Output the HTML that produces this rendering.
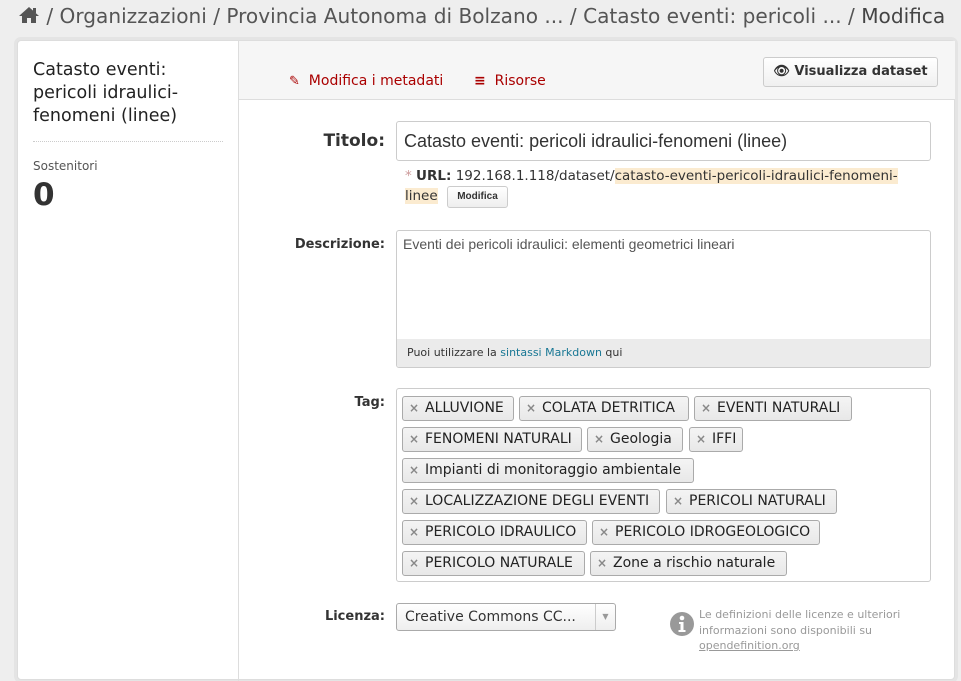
<!DOCTYPE html>
<html><head><meta charset="utf-8"><style>
*{margin:0;padding:0;box-sizing:border-box}
body{width:961px;height:659px;overflow:hidden;background:#eee;font-family:"DejaVu Sans",sans-serif;color:#333;position:relative}
.a{position:absolute;white-space:nowrap}
.bc{left:18px;top:4px;font-size:20.1px;color:#555}
.panel{left:17px;top:40px;width:938px;height:640px;background:#fff;border:1px solid #ddd;border-radius:4px;box-shadow:0 0 0 3px #e4e4e4}
.side{left:0;top:0;width:221px;height:640px;border-right:1px solid #ddd}
.hdr{left:221px;top:0;width:716px;height:59px;background:#f6f6f6;border-bottom:1px solid #ddd}
.lbl{font-weight:bold;text-align:right;width:200px}
.tag{position:absolute;height:25px;border:1px solid #aaa;border-radius:3px;background:linear-gradient(#f4f4f4,#e8e8e8);font-size:14px;line-height:23px;padding-left:22px;color:#222;white-space:nowrap;overflow:hidden}
.tag:before{content:"×";position:absolute;left:6px;top:0;color:#888;font-weight:bold;font-size:12px}
</style></head><body>
<div class="a bc"><svg width="22" height="18" viewBox="0 0 22 18" style="vertical-align:-1px"><path d="M11 1 L1 10 L4 10 L4 17 L9 17 L9 12 L13 12 L13 17 L18 17 L18 10 L21 10 Z" fill="#555"/><rect x="15" y="2" width="3" height="5" fill="#555"/></svg> / Organizzazioni / Provincia Autonoma di Bolzano ... / Catasto eventi: pericoli ... / <span style="color:#444">Modifica</span></div>
<div class="a panel">
 <div class="a side">
  <div class="a" style="left:15px;top:18px;font-size:17.5px;line-height:23px;color:#222;white-space:normal;width:195px">Catasto eventi: pericoli idraulici-fenomeni (linee)</div>
  <div class="a" style="left:15px;top:100px;width:190px;border-top:1px dotted #ccc"></div>
  <div class="a" style="left:15px;top:118px;font-size:12px;color:#555">Sostenitori</div>
  <div class="a" style="left:15px;top:136px;font-size:31px;font-weight:bold;color:#333">0</div>
 </div>
 <div class="a hdr">
  <div class="a" style="left:50px;top:32px;font-size:14px;color:#a00"><span style="font-size:13px">✎</span>&nbsp; Modifica i metadati</div>
  <div class="a" style="left:235px;top:32px;font-size:14px;color:#a00"><span style="font-weight:bold">≡</span>&nbsp; Risorse</div>
  <div class="a" style="left:524px;top:16px;width:175px;height:30px;border:1px solid #ccc;border-radius:3px;background:linear-gradient(#fff,#f0f0f0);font-size:13px;font-weight:bold;line-height:28px;text-align:center;color:#333">👁&#xFE0E; Visualizza dataset</div>
 </div>
</div>
<div class="a lbl" style="left:185px;top:131px;font-size:17px">Titolo:</div>
<div class="a" style="left:396px;top:121px;width:535px;height:40px;border:1px solid #ccc;border-radius:3px;background:#fff;font-family:'Liberation Sans',sans-serif;font-size:18px;line-height:38px;padding-left:7px;color:#333">Catasto eventi: pericoli idraulici-fenomeni (linee)</div>
<div class="a" style="left:405px;top:168px;font-size:13.5px;color:#333"><span style="color:#c99">*</span> <b>URL:</b> 192.168.1.118/dataset/<span style="background:#fbebd0">catasto-eventi-pericoli-idraulici-fenomeni-</span></div>
<div class="a" style="left:405px;top:188px;font-size:13.5px"><span style="background:#fbebd0">linee</span></div>
<div class="a" style="left:447px;top:186px;width:61px;height:22px;border:1px solid #ccc;border-radius:3px;background:linear-gradient(#fff,#eee);font-size:10px;font-weight:bold;text-align:center;line-height:20px;font-family:'Liberation Sans',sans-serif">Modifica</div>
<div class="a lbl" style="left:185px;top:237px;font-size:13px">Descrizione:</div>
<div class="a" style="left:396px;top:230px;width:535px;height:138px;border:1px solid #ccc;border-radius:3px;background:#fff;overflow:hidden">
 <div class="a" style="left:6px;top:5px;font-size:14px;color:#555;font-family:'Liberation Sans',sans-serif">Eventi dei pericoli idraulici: elementi geometrici lineari</div>
 <div class="a" style="left:0;top:108px;width:535px;height:30px;background:#ebebeb;font-size:11px;line-height:28px;padding-left:10px;color:#333">Puoi utilizzare la <span style="color:#187794">sintassi Markdown</span> qui</div>
</div>
<div class="a lbl" style="left:185px;top:395px;font-size:13px">Tag:</div>
<div class="a" style="left:396px;top:388px;width:535px;height:194px;border:1px solid #ccc;border-radius:3px;background:#fff"></div>
<div class="tag" style="left:402px;top:396px;width:112px">ALLUVIONE</div>
<div class="tag" style="left:519px;top:396px;width:170px">COLATA DETRITICA</div>
<div class="tag" style="left:694px;top:396px;width:158px">EVENTI NATURALI</div>
<div class="tag" style="left:402px;top:427px;width:180px">FENOMENI NATURALI</div>
<div class="tag" style="left:587px;top:427px;width:96px">Geologia</div>
<div class="tag" style="left:689px;top:427px;width:54px">IFFI</div>
<div class="tag" style="left:402px;top:458px;width:292px">Impianti di monitoraggio ambientale</div>
<div class="tag" style="left:402px;top:489px;width:258px">LOCALIZZAZIONE DEGLI EVENTI</div>
<div class="tag" style="left:666px;top:489px;width:171px">PERICOLI NATURALI</div>
<div class="tag" style="left:402px;top:520px;width:185px">PERICOLO IDRAULICO</div>
<div class="tag" style="left:592px;top:520px;width:228px">PERICOLO IDROGEOLOGICO</div>
<div class="tag" style="left:402px;top:551px;width:183px">PERICOLO NATURALE</div>
<div class="tag" style="left:590px;top:551px;width:197px">Zone a rischio naturale</div>
<div class="a lbl" style="left:185px;top:609px;font-size:13px">Licenza:</div>
<div class="a" style="left:396px;top:603px;width:220px;height:28px;border:1px solid #aaa;border-radius:3px;background:linear-gradient(#fff,#eee);font-size:14px;line-height:26px;padding-left:8px">Creative Commons CC...<div class="a" style="left:198px;top:0;width:20px;height:26px;border-left:1px solid #ccc;font-size:8px;color:#999;text-align:center">▼</div></div>
<svg class="a" style="left:670px;top:612px" width="24" height="24" viewBox="0 0 24 24"><circle cx="12" cy="12" r="12" fill="#999"/><circle cx="12" cy="6" r="2.3" fill="#fff"/><path d="M9 10h4.5v8h2v2h-7v-2h2v-6h-1.5z" fill="#fff"/></svg>
<div class="a" style="left:699px;top:607px;font-size:11px;line-height:15.5px;color:#999">Le definizioni delle licenze e ulteriori<br>informazioni sono disponibili su<br><span style="text-decoration:underline">opendefinition.org</span></div>
</body></html>
